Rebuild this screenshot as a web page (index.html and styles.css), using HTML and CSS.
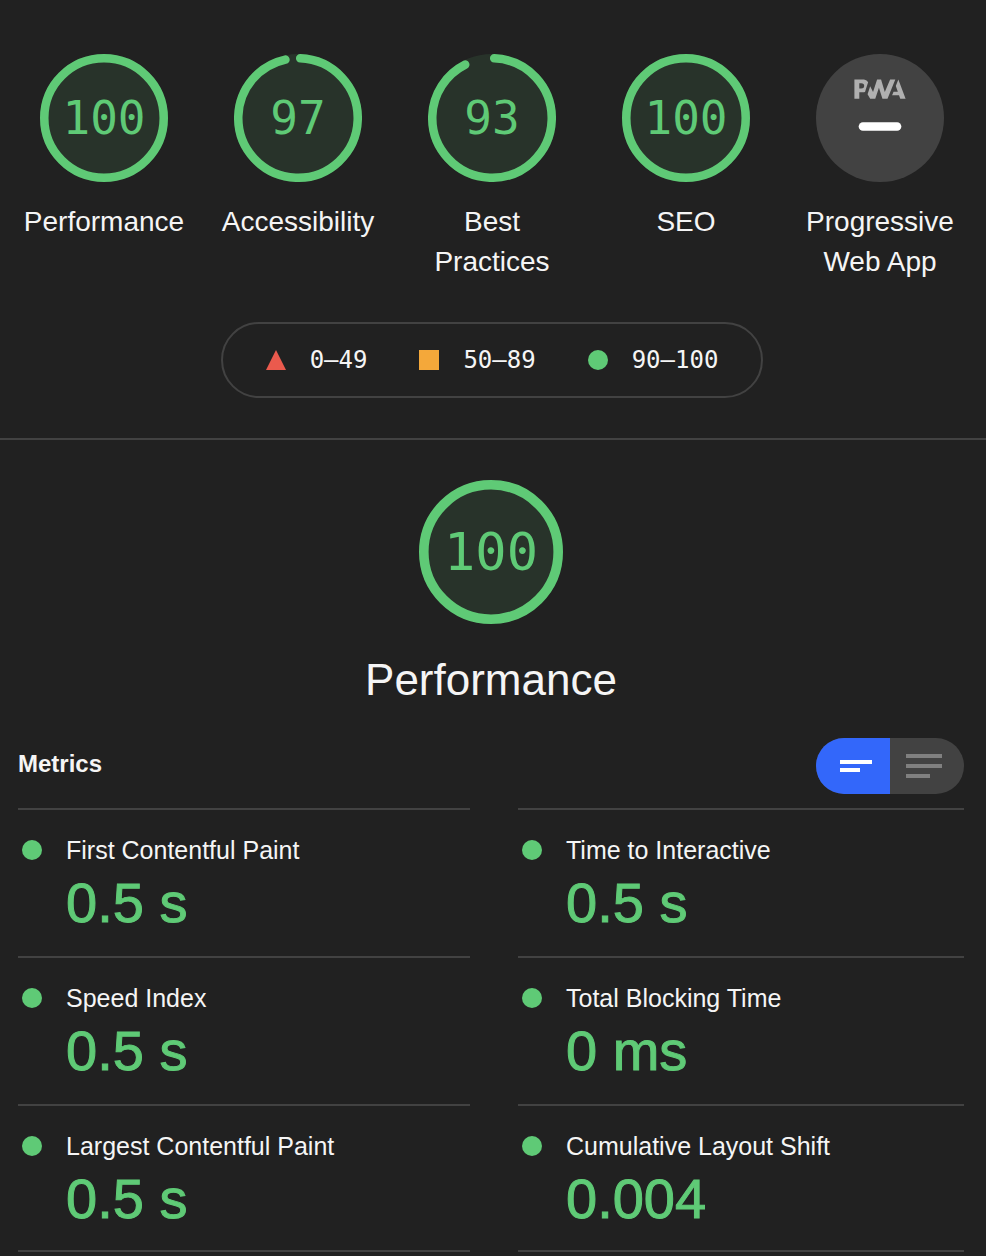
FILE: index.html
```html
<!DOCTYPE html>
<html lang="en">
<head>
<meta charset="utf-8">
<meta name="viewport" content="width=device-width, initial-scale=1">
<title>Lighthouse Report</title>
<link rel="stylesheet" href="styles.css">
</head>
<body>
<header class="scores">
  <nav class="gauges" aria-label="Categories">
    <a class="gauge" href="#performance">
      <span class="dial">
        <svg class="ring" viewBox="0 0 120 120" aria-hidden="true"><circle class="ring-base" cx="60" cy="60" r="60"/><circle class="ring-arc" cx="60" cy="60" r="56"/></svg>
        <span class="score">100</span>
      </span>
      <span class="gauge-label">Performance</span>
    </a>
    <a class="gauge" href="#accessibility">
      <span class="dial">
        <svg class="ring" viewBox="0 0 120 120" aria-hidden="true"><circle class="ring-base" cx="60" cy="60" r="60"/><circle class="ring-arc" cx="60" cy="60" r="56" stroke-dasharray="337.3 352" transform="rotate(-87.9 60 60)"/></svg>
        <span class="score">97</span>
      </span>
      <span class="gauge-label">Accessibility</span>
    </a>
    <a class="gauge" href="#best-practices">
      <span class="dial">
        <svg class="ring" viewBox="0 0 120 120" aria-hidden="true"><circle class="ring-base" cx="60" cy="60" r="60"/><circle class="ring-arc" cx="60" cy="60" r="56" stroke-dasharray="323.2 352" transform="rotate(-87.9 60 60)"/></svg>
        <span class="score">93</span>
      </span>
      <span class="gauge-label">Best Practices</span>
    </a>
    <a class="gauge" href="#seo">
      <span class="dial">
        <svg class="ring" viewBox="0 0 120 120" aria-hidden="true"><circle class="ring-base" cx="60" cy="60" r="60"/><circle class="ring-arc" cx="60" cy="60" r="56"/></svg>
        <span class="score">100</span>
      </span>
      <span class="gauge-label">SEO</span>
    </a>
    <a class="gauge" href="#pwa">
      <span class="dial">
        <svg class="ring" viewBox="0 0 60 60" aria-hidden="true">
          <circle cx="30" cy="30" r="30" fill="#424242"/>
          <g fill="#b0b0b0">
            <path d="M35.66 19.39l.7-1.75h2L37.4 15 38.6 12l3.4 9h-2.51l-.58-1.61z"/>
            <path d="M33.52 21l3.65-9h-2.42l-2.5 5.82L30.5 12h-1.86l-1.9 5.82-1.35-2.65-1.21 3.72L25.4 21h2.38l1.72-5.2 1.64 5.2z"/>
            <path fill-rule="evenodd" d="M20.3 17.91h1.48c.45 0 .85-.05 1.2-.15l.39-1.18 1.07-3.3a2.64 2.64 0 0 0-.28-.37c-.55-.6-1.36-.91-2.42-.91H18v9h2.3V17.9zm1.96-3.84c.22.22.33.5.33.87 0 .36-.1.65-.29.87-.2.23-.59.35-1.15.35h-.86v-2.41h.87c.52 0 .89.1 1.1.32z"/>
          </g>
          <rect x="20" y="32" width="20" height="4" rx="2" fill="#fff"/>
        </svg>
      </span>
      <span class="gauge-label">Progressive Web App</span>
    </a>
  </nav>
  <div class="legend">
    <span class="range"><svg class="mark" viewBox="0 0 20 20" aria-hidden="true"><path d="M10 0L20 20H0z" fill="#eb5a4d"/></svg>0–49</span>
    <span class="range"><svg class="mark" viewBox="0 0 20 20" aria-hidden="true"><path d="M0 0h20v20H0z" fill="#f4a83a"/></svg>50–89</span>
    <span class="range"><svg class="mark" viewBox="0 0 20 20" aria-hidden="true"><circle cx="10" cy="10" r="10" fill="#5fca76"/></svg>90–100</span>
  </div>
</header>
<main class="category" id="performance">
  <div class="category-head">
    <span class="dial dial-large">
      <svg class="ring" viewBox="0 0 120 120" aria-hidden="true"><circle class="ring-base" cx="60" cy="60" r="60"/><circle class="ring-arc" cx="60" cy="60" r="56"/></svg>
      <span class="score">100</span>
    </span>
    <h1 class="category-title">Performance</h1>
  </div>
  <div class="metrics-head">
    <h2 class="metrics-title">Metrics</h2>
    <div class="toggle" role="radiogroup" aria-label="Metric view">
      <label class="option">
        <input class="option-input" type="radio" name="view" aria-label="Simple view" checked>
        <svg class="option-icon" viewBox="0 0 74 56" aria-hidden="true"><path d="M24 22h32v4H24zM24 30h20v4H24z"/></svg>
      </label>
      <label class="option">
        <input class="option-input" type="radio" name="view" aria-label="Detailed view">
        <svg class="option-icon" viewBox="0 0 74 56" aria-hidden="true"><path d="M16 16h36v4H16zM16 26h36v4H16zM16 36h24v4H16z"/></svg>
      </label>
    </div>
  </div>
  <div class="metrics">
    <section class="metric"><span class="dot"></span><h3 class="metric-name">First Contentful Paint</h3><p class="metric-value">0.5 s</p></section>
    <section class="metric"><span class="dot"></span><h3 class="metric-name">Time to Interactive</h3><p class="metric-value">0.5 s</p></section>
    <section class="metric"><span class="dot"></span><h3 class="metric-name">Speed Index</h3><p class="metric-value">0.5 s</p></section>
    <section class="metric"><span class="dot"></span><h3 class="metric-name">Total Blocking Time</h3><p class="metric-value">0 ms</p></section>
    <section class="metric metric-last"><span class="dot"></span><h3 class="metric-name">Largest Contentful Paint</h3><p class="metric-value">0.5 s</p></section>
    <section class="metric metric-last"><span class="dot"></span><h3 class="metric-name">Cumulative Layout Shift</h3><p class="metric-value">0.004</p></section>
  </div>
</main>
</body>
</html>
```
FILE: styles.css
```css
:root {
  --bg: #212121;
  --line: #424242;
  --text: #f5f5f5;
  --pass: #5fca76;
  --pass-fill: #28332a;
  --mono: "DejaVu Sans Mono", monospace;
}

* {
  box-sizing: border-box;
}

body {
  margin: 0;
  background: var(--bg);
  color: var(--text);
  font-family: "Liberation Sans", Arial, sans-serif;
  font-size: 24px;
}

h1,
h2,
h3,
p {
  margin: 0;
}

.scores {
  display: flex;
  flex-direction: column;
  align-items: center;
  gap: 40px;
  padding: 54px 9px 40px 7px;
  border-bottom: 2px solid var(--line);
}

.gauges {
  display: grid;
  grid-template-columns: repeat(5, 1fr);
  align-self: stretch;
}

.gauge {
  display: flex;
  flex-direction: column;
  align-items: center;
  gap: 20px;
  padding: 0 12px;
  color: inherit;
  text-decoration: none;
}

.dial {
  display: grid;
  place-items: center;
  width: 128px;
  height: 128px;
  font-size: 46px;
}

.dial-large {
  width: 144px;
  height: 144px;
  font-size: 52px;
}

.ring,
.score {
  grid-area: 1 / 1;
}

.ring {
  width: 100%;
  height: 100%;
}

.ring-base {
  fill: var(--pass-fill);
}

.ring-arc {
  fill: none;
  stroke: var(--pass);
  stroke-width: 8;
  stroke-linecap: round;
}

.score {
  color: var(--pass);
  font-family: var(--mono);
  line-height: 1;
}

.gauge-label {
  font-size: 28px;
  line-height: 40px;
  text-align: center;
}

.legend {
  display: flex;
  gap: 52px;
  padding: 16px 43px;
  border: 2px solid var(--line);
  border-radius: 38px;
  font-family: var(--mono);
  line-height: 40px;
}

.range {
  display: flex;
  align-items: center;
  gap: 24px;
}

.mark {
  width: 20px;
  height: 20px;
}

.category {
  padding: 40px 22px 0 18px;
}

.category-head {
  display: flex;
  flex-direction: column;
  align-items: center;
  gap: 28px;
}

.category-title {
  font-size: 44px;
  font-weight: 400;
  line-height: 56px;
}

.metrics-head {
  display: flex;
  justify-content: space-between;
  margin: 30px 0 14px;
}

.metrics-title {
  font-size: 24px;
  line-height: 52px;
}

.toggle {
  display: flex;
  overflow: hidden;
  border-radius: 28px;
  background: var(--line);
}

.option {
  display: grid;
  width: 74px;
  height: 56px;
  cursor: pointer;
}

.option-input,
.option-icon {
  grid-area: 1 / 1;
  width: 100%;
  height: 100%;
  margin: 0;
}

.option-input {
  appearance: none;
}

.option-input:checked {
  background: #3367fa;
}

.option-icon {
  z-index: 1;
  fill: #808080;
  pointer-events: none;
}

.option-input:checked + .option-icon {
  fill: #fff;
}

.metrics {
  display: grid;
  grid-template-columns: 452fr 446fr;
  column-gap: 48px;
}

.metric {
  display: grid;
  grid-template-columns: 20px 1fr;
  column-gap: 24px;
  align-items: center;
  padding: 20px 4px;
  border-top: 2px solid var(--line);
}

.metric-last {
  padding-bottom: 18px;
  border-bottom: 2px solid var(--line);
}

.dot {
  width: 20px;
  height: 20px;
  border-radius: 50%;
  background: var(--pass);
}

.metric-name {
  font-size: 25px;
  font-weight: 400;
  line-height: 40px;
}

.metric-value {
  grid-column: 2;
  color: var(--pass);
  font-size: 56px;
  line-height: 66px;
  -webkit-text-stroke: 1px var(--pass);
}
```
